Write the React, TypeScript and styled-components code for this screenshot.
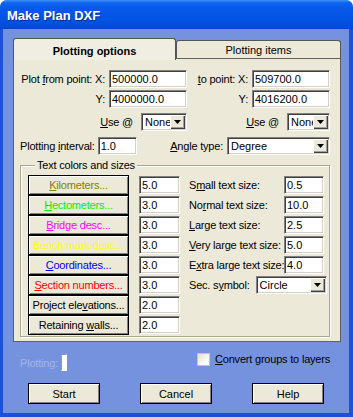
import React from 'react';
import styled, { createGlobalStyle } from 'styled-components';

const Global = createGlobalStyle`
  html, body { margin: 0; padding: 0; background: #ffffff; }
  body {
    font-family: "Liberation Sans", Arial, sans-serif;
    font-size: 11px;
    letter-spacing: -0.2px;
    color: #000;
  }
  * { box-sizing: border-box; }
`;

const FACE = '#ece9d8';

const Window = styled.div`
  width: 353px;
  height: 417px;
  display: flex;
  flex-direction: column;
  background: #7592de;
  border-radius: 7px 7px 0 0;
  overflow: hidden;
`;

const TitleBar = styled.div`
  height: 29px;
  flex: none;
  display: flex;
  align-items: center;
  padding: 2px 0 0 7px;
  background: linear-gradient(
    180deg,
    #3d8ff8 0px,
    #0d64f0 3px,
    #0759ea 8px,
    #0454e4 18px,
    #034fdc 25px,
    #0246cc 29px
  );
  color: #fff;
  font-weight: bold;
  font-size: 13px;
  letter-spacing: 0;
  text-shadow: 1px 1px 0 #0a2a9a;
`;

const Frame = styled.div`
  flex: 1;
  display: flex;
  flex-direction: column;
  border-style: solid;
  border-color: #1c51da;
  border-width: 0 4px 4px 3px;
  padding: 9px 8px 0 10px;
`;

const TabStrip = styled.div`
  display: flex;
  align-items: flex-end;
  height: 20px;
  flex: none;
`;

const Tab = styled.div<{ $active?: boolean; $w: number }>`
  position: relative;
  z-index: ${p => (p.$active ? 2 : 1)};
  width: ${p => p.$w}px;
  height: ${p => (p.$active ? 22 : 18)}px;
  margin-bottom: ${p => (p.$active ? -2 : 0)}px;
  background: ${p => (p.$active ? '#f0eee3' : FACE)};
  border: 1px solid #555555;
  border-bottom: none;
  border-radius: 3px 3px 0 0;
  display: flex;
  align-items: center;
  justify-content: center;
  padding-top: ${p => (p.$active ? 2 : 1)}px;
  font-weight: ${p => (p.$active ? 'bold' : 'normal')};
  font-size: 11px;
  letter-spacing: 0;
`;

const Panel = styled.div`
  flex: none;
  background: ${FACE};
  border: 1px solid #606060;
  padding: 11px 10px 4px 6px;
  display: flex;
  flex-direction: column;
`;

const CoordGrid = styled.div`
  display: grid;
  grid-template-columns: 89px 78px 65px 78px;
  grid-auto-rows: 18px;
  row-gap: 2px;
`;

const CellLabel = styled.div`
  line-height: 18px;
  text-align: right;
  padding-right: 4px;
  white-space: nowrap;
`;

const UseRow = styled.div`
  display: grid;
  grid-template-columns: 167px 143px;
  height: 18px;
  margin-top: 5px;
`;

const UseCell = styled.div`
  display: flex;
  align-items: center;
  justify-content: flex-end;
  gap: 8px;
  white-space: nowrap;
`;

const IntervalRow = styled.div`
  display: flex;
  align-items: center;
  justify-content: space-between;
  height: 18px;
  margin-top: 6px;
`;

const Pair = styled.div<{ $gap: number }>`
  display: flex;
  align-items: center;
  gap: ${p => p.$gap}px;
  white-space: nowrap;
`;

const Field = styled.input<{ $w: number }>`
  width: ${p => p.$w}px;
  height: 18px;
  margin: 0;
  padding: 0 2px;
  background: #fff;
  border: 1px solid;
  border-color: #808080 #ffffff #ffffff #808080;
  box-shadow: inset 1px 1px 0 #404040, inset -1px -1px 0 #d4d0c8;
  font-family: "Liberation Sans", Arial, sans-serif;
  font-size: 11px;
  letter-spacing: 0;
  color: #000;
  outline: none;
`;

const Combo = styled.div<{ $w: number }>`
  width: ${p => p.$w}px;
  height: 18px;
  flex: none;
  background: #fff;
  border: 1px solid;
  border-color: #808080 #ffffff #ffffff #808080;
  box-shadow: inset 1px 1px 0 #404040, inset -1px -1px 0 #d4d0c8;
  display: flex;
  align-items: stretch;
  padding: 1px;
  letter-spacing: 0;
`;

const ComboText = styled.span`
  flex: 1;
  min-width: 0;
  overflow: hidden;
  white-space: nowrap;
  padding-left: 2px;
  line-height: 14px;
`;

const DropBtn = styled.span`
  width: 15px;
  flex: none;
  background: ${FACE};
  box-shadow: inset 1px 1px 0 #ffffff, inset -1px -1px 0 #404040, inset -2px -2px 0 #a0a0a0;
  display: flex;
  align-items: center;
  justify-content: center;
`;

const Group = styled.div`
  margin-top: 10px;
  border: 1px solid #a9a693;
  box-shadow: inset 1px 1px 0 #ffffff, 1px 1px 0 #ffffff;
  padding: 0 0 1px 7px;
`;

const GroupTitle = styled.div`
  margin: -7px 0 3px 7px;
  padding: 0 2px;
  width: fit-content;
  line-height: 13px;
  background: ${FACE};
`;

const GroupBody = styled.div`
  display: flex;
  gap: 9px;
`;

const Column = styled.div`
  display: flex;
  flex-direction: column;
`;

const Row = styled.div<{ $gap: number }>`
  height: 20px;
  display: flex;
  align-items: center;
  gap: ${p => p.$gap}px;
  white-space: nowrap;
`;

const SizeLabel = styled.span`
  width: 95px;
`;

const ColorButton = styled.button<{ $color: string }>`
  width: 101px;
  height: 20px;
  margin: 0;
  padding: 0;
  background: ${FACE};
  border: 1px solid #000;
  box-shadow: inset 1px 1px 0 #ffffff, inset -1px -1px 0 #808080;
  color: ${p => p.$color};
  font-family: "Liberation Sans", Arial, sans-serif;
  font-size: 11px;
  letter-spacing: -0.2px;
  display: flex;
  align-items: center;
  justify-content: center;
`;

const Acc = styled.span`
  text-decoration: underline;
`;

const StatusRow = styled.div`
  display: grid;
  grid-template-columns: 184px 1fr;
  height: 18px;
  margin-top: 11px;
`;

const Progress = styled.div`
  display: flex;
  align-items: center;
  gap: 3px;
  padding: 1px 0 0 7px;
  color: #a4b5e6;
`;

const ProgressBox = styled.span`
  width: 6px;
  height: 17px;
  background: #fff;
  border: 1px solid;
  border-color: #8a9acb #ffffff #ffffff #8a9acb;
`;

const CheckWrap = styled.label`
  display: flex;
  align-items: flex-start;
  gap: 5px;
  color: #000;
`;

const CheckBox = styled.span`
  width: 13px;
  height: 13px;
  flex: none;
  background: linear-gradient(135deg, #e4e1d4 0%, #ffffff 80%);
  border: 1px solid #c9c5b5;
`;

const CheckText = styled.span`
  line-height: 12px;
`;

const ButtonRow = styled.div`
  display: flex;
  gap: 40px;
  margin-top: 12px;
  padding-left: 15px;
`;

const PushButton = styled.button`
  width: 72px;
  height: 21px;
  margin: 0;
  padding: 0;
  background: ${FACE};
  border: 1px solid #000;
  box-shadow: inset 1px 1px 0 #ffffff, inset -1px -1px 0 #808080;
  font-family: "Liberation Sans", Arial, sans-serif;
  font-size: 11px;
  color: #000;
`;

const Arrow = () => (
  <svg width="7" height="4" viewBox="0 0 7 4">
    <polygon points="0,0 7,0 3.5,4" fill="#000" />
  </svg>
);

const Select = ({ w, value }: { w: number; value: string }) => (
  <Combo $w={w}>
    <ComboText>{value}</ComboText>
    <DropBtn>
      <Arrow />
    </DropBtn>
  </Combo>
);

const colorRows: { label: React.ReactNode; color: string; value: string }[] = [
  { label: <><Acc>K</Acc>ilometers...</>, color: '#808000', value: '5.0' },
  { label: <><Acc>H</Acc>ectometers...</>, color: '#00f000', value: '3.0' },
  { label: <><Acc>B</Acc>ridge desc...</>, color: '#ff00ff', value: '3.0' },
  { label: <>Bench mark desc...</>, color: '#ffff00', value: '3.0' },
  { label: <><Acc>C</Acc>oordinates...</>, color: '#0000ff', value: '3.0' },
  { label: <><Acc>S</Acc>ection numbers...</>, color: '#ff0000', value: '3.0' },
  { label: <>Project ele<Acc>v</Acc>ations...</>, color: '#000000', value: '2.0' },
  { label: <>Retaining <Acc>w</Acc>alls...</>, color: '#000000', value: '2.0' },
];

const sizeRows: { label: React.ReactNode; value: string }[] = [
  { label: <>S<Acc>m</Acc>all text size:</>, value: '0.5' },
  { label: <>No<Acc>r</Acc>mal text size:</>, value: '10.0' },
  { label: <><Acc>L</Acc>arge text size:</>, value: '2.5' },
  { label: <><Acc>V</Acc>ery large text size:</>, value: '5.0' },
  { label: <>E<Acc>x</Acc>tra large text size:</>, value: '4.0' },
];

export default function App() {
  return (
    <>
      <Global />
      <Window>
        <TitleBar>Make Plan DXF</TitleBar>
        <Frame>
          <TabStrip>
            <Tab $active $w={163}>Plotting options</Tab>
            <Tab $w={165}>Plotting items</Tab>
          </TabStrip>
          <Panel>
            <CoordGrid>
              <CellLabel>Plot <Acc>f</Acc>rom point: X:</CellLabel>
              <Field $w={78} readOnly value="500000.0" />
              <CellLabel><Acc>t</Acc>o point: X:</CellLabel>
              <Field $w={78} readOnly value="509700.0" />
              <CellLabel>Y:</CellLabel>
              <Field $w={78} readOnly value="4000000.0" />
              <CellLabel>Y:</CellLabel>
              <Field $w={78} readOnly value="4016200.0" />
            </CoordGrid>
            <UseRow>
              <UseCell>
                <span><Acc>U</Acc>se @</span>
                <Select w={46} value="None" />
              </UseCell>
              <UseCell>
                <span><Acc>U</Acc>se @</span>
                <Select w={43} value="None" />
              </UseCell>
            </UseRow>
            <IntervalRow>
              <Pair $gap={3}>
                <span>Plotting <Acc>i</Acc>nterval:</span>
                <Field $w={39} readOnly value="1.0" />
              </Pair>
              <Pair $gap={4}>
                <span><Acc>A</Acc>ngle type:</span>
                <Select w={103} value="Degree" />
              </Pair>
            </IntervalRow>
            <Group>
              <GroupTitle>Text colors and sizes</GroupTitle>
              <GroupBody>
                <Column>
                  {colorRows.map((r, i) => (
                    <Row key={i} $gap={10}>
                      <ColorButton $color={r.color}>
                        <span>{r.label}</span>
                      </ColorButton>
                      <Field $w={41} readOnly value={r.value} />
                    </Row>
                  ))}
                </Column>
                <Column>
                  {sizeRows.map((r, i) => (
                    <Row key={i} $gap={0}>
                      <SizeLabel>{r.label}</SizeLabel>
                      <Field $w={40} readOnly value={r.value} />
                    </Row>
                  ))}
                  <Row $gap={6}>
                    <span>Sec. s<Acc>y</Acc>mbol:</span>
                    <Select w={71} value="Circle" />
                  </Row>
                </Column>
              </GroupBody>
            </Group>
          </Panel>
          <StatusRow>
            <Progress>
              <span>Plotting:</span>
              <ProgressBox />
            </Progress>
            <CheckWrap>
              <CheckBox />
              <CheckText><Acc>C</Acc>onvert groups to layers</CheckText>
            </CheckWrap>
          </StatusRow>
          <ButtonRow>
            <PushButton>Start</PushButton>
            <PushButton>Cancel</PushButton>
            <PushButton>Help</PushButton>
          </ButtonRow>
        </Frame>
      </Window>
    </>
  );
}
